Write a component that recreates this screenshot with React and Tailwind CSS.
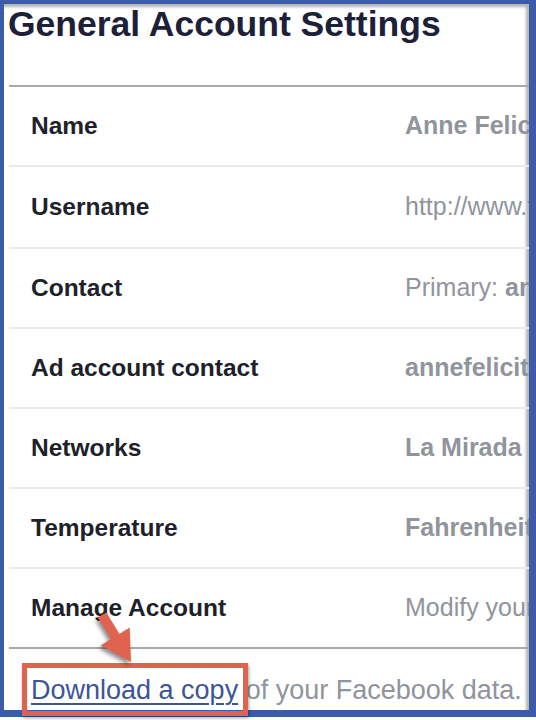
import React from 'react';

const rows = [
  { label: 'Name', value: <span className="font-bold">Anne Felicity</span>, h: 'h-[80px]' },
  { label: 'Username', value: 'http://www.facebook.com/annefelicity', h: 'h-[82px]' },
  {
    label: 'Contact',
    value: (
      <>
        Primary: <span className="font-bold">annefelicity@gmail.com</span>
      </>
    ),
    h: 'h-[80px]',
  },
  { label: 'Ad account contact', value: <span className="font-bold">annefelicity@gmail.com</span>, h: 'h-[80px]' },
  { label: 'Networks', value: <span className="font-bold">La Mirada High School</span>, h: 'h-[80px]' },
  { label: 'Temperature', value: <span className="font-bold">Fahrenheit</span>, h: 'h-[80px]' },
];

const Row = ({ label, value, h, last }) => (
  <div className={`flex items-center ${h} ${last ? '' : 'border-b-2 border-[#e9eaee]'}`}>
    <div className="w-[396px] shrink-0 pl-[22px] text-[24.5px] font-bold text-[#1d2129] whitespace-nowrap">{label}</div>
    <div className="whitespace-nowrap text-[25px] text-[#90949c]">{value}</div>
  </div>
);

const App = () => {
  return (
    <div className="relative w-[536px] h-[720px] bg-white overflow-hidden font-['Liberation_Sans',Arial,sans-serif]">
      <div className="h-[717px] bg-[#3b5ca8] pl-[4px] pt-[4px] pr-[7px] pb-[7px]">
        <div className="h-full bg-white overflow-hidden shadow-[inset_-3px_3px_3px_rgba(0,0,0,0.3)]">
          {/* Header */}
          <div className="h-[81px] pt-[3px] pl-[4px]">
            <h1 className="text-[35.5px] leading-[34px] font-bold text-[#1c2039] whitespace-nowrap">
              General Account Settings
            </h1>
          </div>

          {/* Settings rows */}
          <div className="ml-[5px] w-[600px] border-t-2 border-[#a9a9a9]">
            {rows.map((r) => (
              <Row key={r.label} {...r} />
            ))}
            <Row
              label="Manage Account"
              value="Modify your Legacy Contact settings or deactivate your account."
              h="h-[78px]"
              last
            />
            <div className="border-t-2 border-[#a9a9a9] pt-[25px] pl-[22px] text-[27px] leading-[32px] whitespace-nowrap text-[#90949c]">
              <a href="#" className="text-[#3b5598] underline decoration-2 underline-offset-[4px]">
                Download a copy
              </a>{' '}
              of your Facebook data.
            </div>
          </div>
        </div>
      </div>

      {/* Annotation: highlight box */}
      <div className="absolute left-[22px] top-[663px] w-[226px] h-[53px] border-[5px] border-[#e0634f] shadow-[1px_2px_3px_rgba(0,0,0,0.35)] pointer-events-none" />

      {/* Annotation: arrow */}
      <svg
        className="absolute left-0 top-0 pointer-events-none drop-shadow-[-2px_3px_2px_rgba(0,0,0,0.45)]"
        width="536"
        height="720"
        viewBox="0 0 536 720"
      >
        <polygon
          points="106.3,612.4 119.5,633.9 129.7,627.6 131,662 100.8,645.4 111,639.1 97.7,617.6"
          fill="#e0634f"
        />
      </svg>
    </div>
  );
};

export default App;
